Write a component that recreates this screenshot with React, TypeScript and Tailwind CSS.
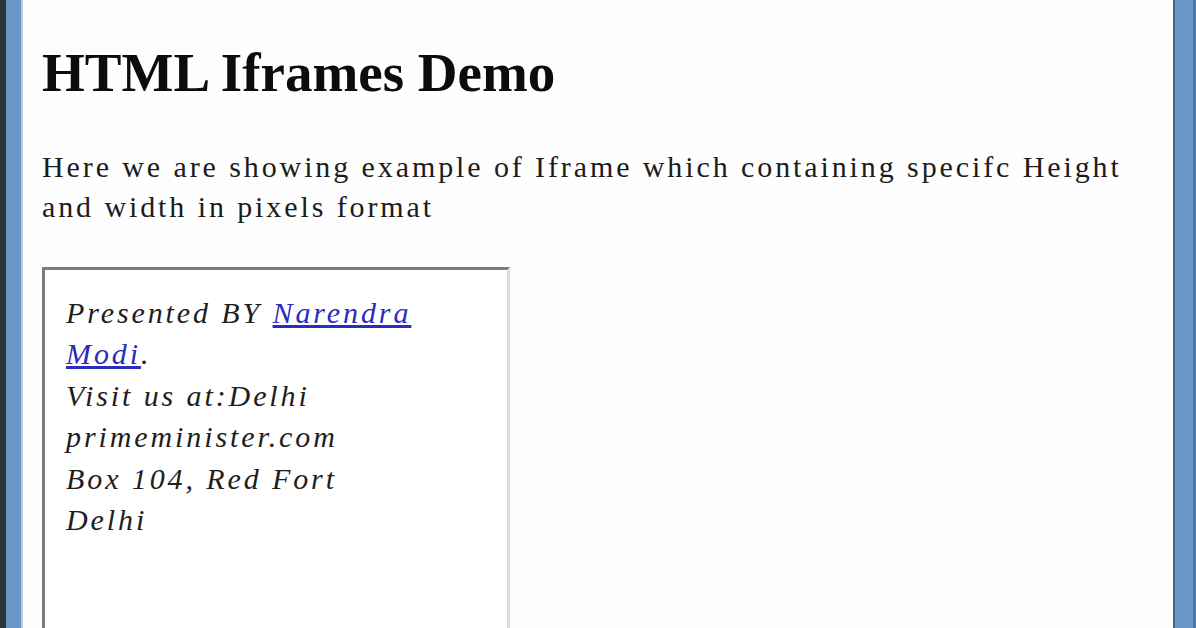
import React from 'react';

// Window frame strips + page with a fake iframe box
export default function App() {
  const serif = { fontFamily: '"Liberation Serif", "Times New Roman", serif' };

  return (
    <div className="flex h-[628px] w-[1196px] overflow-hidden bg-white" style={serif}>
      {/* left window border */}
      <div className="w-[6px] bg-[#27373c]" />
      <div className="w-[15px] bg-[#6a96c5]" />
      <div className="w-[2px] bg-[#b7cde4]" />

      {/* page */}
      <div className="flex-1 bg-[#fefefe] pl-[19px] text-[#1c1c1c]">
        <h1 className="pt-[45px] text-[55px] font-bold leading-[55px] text-[#0c0c0c]">HTML Iframes Demo</h1>

        <p className="mt-[47px] w-[1100px] text-[30px] leading-[40px] tracking-[2.9px]">
          Here we are showing example of Iframe which containing specifc Height and width in pixels format
        </p>

        <div className="mt-[40px] h-[400px] w-[468px] border-[3px] border-t-[#7c7c7c] border-l-[#7c7c7c] border-r-[#dcdcdc] border-b-[#dcdcdc] bg-white pl-[21px] pt-[22px]">
          <div className="w-[420px] text-[30px] italic leading-[41.4px] tracking-[2.9px] text-[#1e1e1e]">
            Presented BY <a className="text-[#2b2bbd] underline">Narendra Modi</a>.
            <br />
            Visit us at:Delhi
            <br />
            primeminister.com
            <br />
            Box 104, Red Fort
            <br />
            Delhi
          </div>
        </div>
      </div>

      {/* right window border */}
      <div className="w-[2px] bg-[#41658c]" />
      <div className="w-[18px] bg-[#6b98c8]" />
      <div className="w-[3px] bg-[#4c76a3]" />
    </div>
  );
}
